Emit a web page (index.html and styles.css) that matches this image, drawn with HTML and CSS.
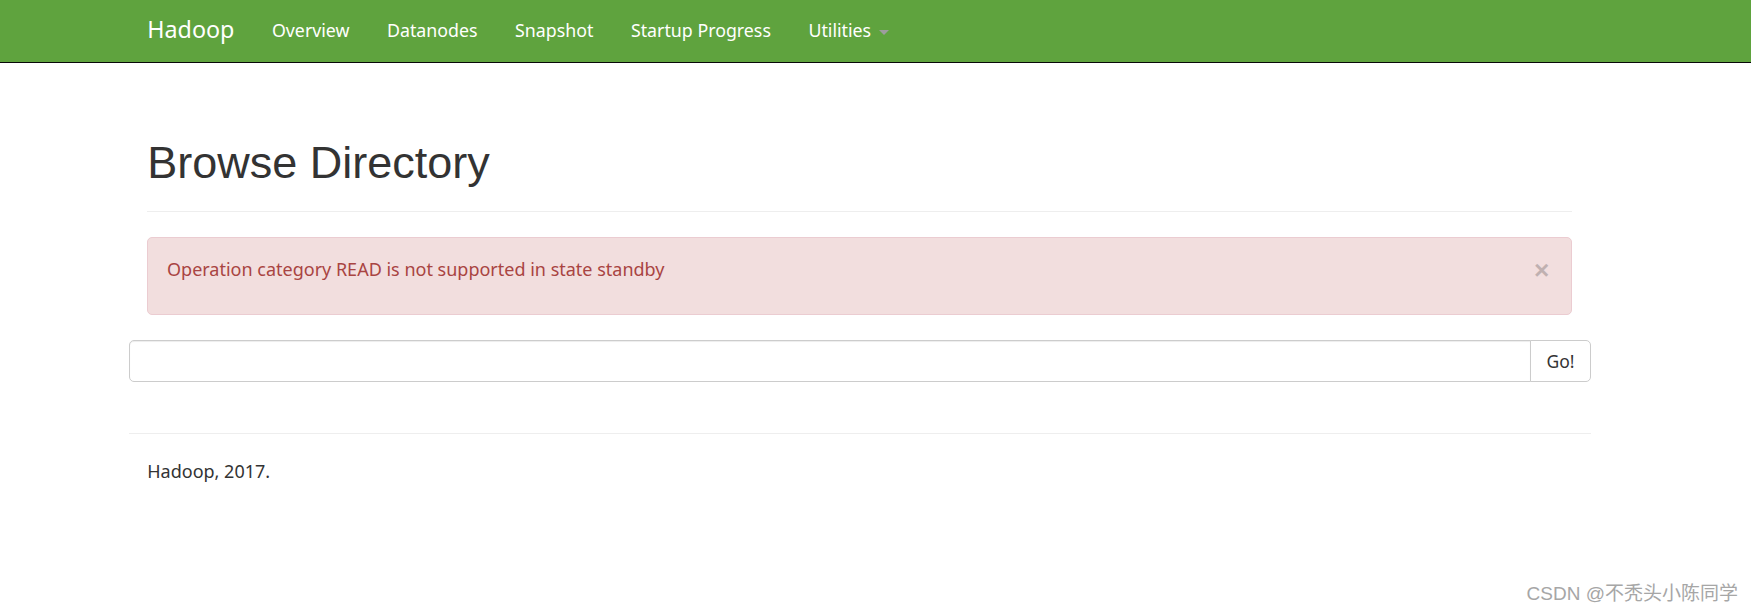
FILE: index.html
```html
<!DOCTYPE html>
<html lang="en">

<head>
    <meta charset="UTF-8">
    <meta name="viewport" content="width=device-width, initial-scale=1.0">
    <title>Browsing HDFS</title>
    <link rel="stylesheet" href="styles.css">
</head>

<body>
    <header class="navbar">
        <div class="container navbar-inner">
            <a class="navbar-brand" href="#">Hadoop</a>
            <ul class="nav">
                <li><a href="#">Overview</a></li>
                <li><a href="#">Datanodes</a></li>
                <li><a href="#">Snapshot</a></li>
                <li><a href="#">Startup Progress</a></li>
                <li><a href="#">Utilities <b class="caret"></b></a></li>
            </ul>
        </div>
    </header>

    <div class="container">
        <div class="page-header">
            <h1>Browse Directory</h1>
        </div>

        <div class="alert">
            <button type="button" class="close">&times;</button>
            <div class="alert-text">Operation category READ is not supported in state standby</div>
        </div>

        <div class="row">
            <div class="input-group">
                <input type="text" class="form-control" id="directory">
                <button class="btn" type="button">Go!</button>
            </div>
        </div>

        <div class="row footer">
            <hr>
            <p class="footer-text">Hadoop, 2017.</p>
        </div>
    </div>

    <div class="watermark">CSDN @不秃头小陈同学</div>
</body>

</html>
```

FILE: styles.css
```css
* {
    margin: 0;
    padding: 0;
    box-sizing: border-box;
}

body {
    font-family: 'Noto Sans', 'Open Sans', sans-serif;
    font-size: 18px;
    line-height: 25px;
    color: #333;
    background: #fff;
    position: relative;
    min-height: 614px;
}

a {
    text-decoration: none;
}

.container {
    display: flow-root;
    width: 1462.5px;
    margin-left: 128.5px;
    padding: 0 18.75px;
}

/* top bar */
.navbar {
    background: #5fa33e;
    border-bottom: 1.25px solid #080808;
    height: 62.5px;
    margin-bottom: 25px;
}

.navbar-inner {
    display: flex;
    align-items: center;
    height: 61.25px;
}

.navbar-brand {
    color: #fff;
    font-size: 23.3px;
    padding-right: 18.75px;
    margin-top: -2px;
}

.nav {
    list-style: none;
    display: flex;
}

.nav a {
    display: block;
    color: #fff;
    font-size: 17.8px;
    padding: 0 18.75px;
}

.caret {
    display: inline-block;
    width: 0;
    height: 0;
    margin-left: 3px;
    vertical-align: middle;
    border-top: 5px solid #9d9d9d;
    border-left: 5px solid transparent;
    border-right: 5px solid transparent;
}

/* heading */
.page-header {
    margin-top: 50px;
    padding-bottom: 11.25px;
    margin-bottom: 25px;
    border-bottom: 1.25px solid #eee;
}

h1 {
    font-family: 'Liberation Sans', Arial, sans-serif;
    font-size: 45px;
    font-weight: 500;
    line-height: 49.5px;
    margin-bottom: 12.5px;
}

/* error box */
.alert {
    position: relative;
    background: #f2dede;
    border: 1.25px solid #ebccd1;
    border-radius: 5px;
    color: #a94442;
    padding: 18.75px 43.75px 32px 18.75px;
    margin-bottom: 25px;
}

.close {
    position: absolute;
    top: 20px;
    right: 22px;
    background: none;
    border: none;
    font-family: 'Liberation Sans', Arial, sans-serif;
    font-size: 26.25px;
    font-weight: bold;
    line-height: 25px;
    color: #000;
    opacity: 0.2;
    cursor: pointer;
}

/* path input */
.row {
    margin: 0 -18.75px;
}

.input-group {
    display: flex;
    height: 42.5px;
}

.form-control {
    flex: 1;
    height: 42.5px;
    border: 1.25px solid #ccc;
    border-radius: 5px 0 0 5px;
    box-shadow: inset 0 1px 1px rgba(0, 0, 0, 0.075);
    padding: 7.5px 15px;
    font-size: 17.5px;
}

.btn {
    width: 61px;
    height: 42.5px;
    margin-left: -1.25px;
    border: 1.25px solid #ccc;
    border-radius: 0 5px 5px 0;
    background: #fff;
    color: #333;
    font-family: inherit;
    font-size: 17.5px;
    cursor: pointer;
}

/* footer */
.footer hr {
    border: none;
    border-top: 1.25px solid #eee;
    margin: 51px 0 25px;
}

.footer-text {
    padding-left: 18.75px;
}

.watermark {
    position: absolute;
    right: 13px;
    bottom: 8px;
    font-family: 'Liberation Sans', 'Noto Sans CJK SC', sans-serif;
    font-size: 19px;
    color: #a6a6a6;
    text-shadow: 0 1px 0 #fff;
}
```
